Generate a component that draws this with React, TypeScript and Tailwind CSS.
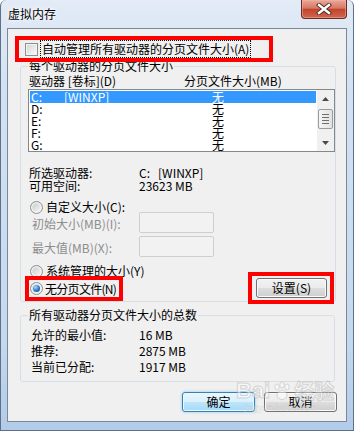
import React from 'react';

const font = "font-['Noto_Sans_CJK_SC','Microsoft_YaHei',sans-serif]";

function Radio({ checked }: { checked?: boolean }) {
  return (
    <span className="flex h-[13px] w-[13px] shrink-0 items-center justify-center rounded-full border border-[#8e8f8f] bg-[linear-gradient(135deg,#d2d2d2,#fafafa)] shadow-[inset_0_0_0_1px_#f4f4f4]">
      {checked ? (
        <span className="h-[7px] w-[7px] rounded-full bg-[radial-gradient(circle_at_35%_30%,#a8dcff,#2a78c8_55%,#0d3f82)]" />
      ) : (
        <span className="h-[7px] w-[7px] rounded-full bg-[linear-gradient(135deg,#cfcfcf,#f2f2f2)]" />
      )}
    </span>
  );
}

function Arrow({ up }: { up?: boolean }) {
  return (
    <div className="flex h-[17px] w-[17px] items-center justify-center">
      <svg width="7" height="4" viewBox="0 0 7 4">
        <path d={up ? 'M0 4 L3.5 0 L7 4 Z' : 'M0 0 L3.5 4 L7 0 Z'} fill="#4a4a4a" />
      </svg>
    </div>
  );
}

const drives = ['C:', 'D:', 'E:', 'F:', 'G:'];

export default function App() {
  return (
    <div className={`relative h-[431px] w-[354px] overflow-hidden rounded-t-[6px] border border-t-0 border-[#5f7188] bg-[linear-gradient(#e2ebf6,#d3e2f2_20%,#c4d8ee_80%,#b2cbe8)] text-[12px] text-black ${font}`}>
      {/* title bar */}
      <div className="flex h-[28px] items-start justify-between">
        <div className="pl-[7px] pt-[6px] text-[12px] leading-[16px] [text-shadow:0_0_6px_#fff,0_0_3px_#fff]">虚拟内存</div>
        <div className="mr-[6px] flex h-[19px] w-[46px] items-center justify-center rounded-b-[4px] border border-t-0 border-[#6b2a22] bg-[linear-gradient(#e9a899,#d77862_45%,#c4432c_52%,#d0684e)] shadow-[inset_0_0_0_1px_#f0b8aa80]">
          <svg width="16" height="12" viewBox="0 0 16 12">
            <path d="M3 2 L13 10 M13 2 L3 10" stroke="#4a2a26" strokeWidth="4.2" strokeLinecap="square" />
            <path d="M3 2 L13 10 M13 2 L3 10" stroke="#ffffff" strokeWidth="2.4" strokeLinecap="square" />
          </svg>
        </div>
      </div>

      {/* client area */}
      <div className="relative ml-[6px] h-[394px] w-[340px] border border-[#7a8898] bg-[#f0f0f0]">
        <div className="pl-[7px] pt-[7px]">
          <div className="relative z-10 flex h-[26px] w-[258px] items-center border-4 border-[#ff0000]">
            <span className="ml-[6px] h-[13px] w-[13px] shrink-0 border border-[#8e8f8f] bg-[linear-gradient(135deg,#d4d4d4,#fbfbfb)] shadow-[inset_0_0_0_1px_#f3f3f3]" />
            <span className="ml-[2px] whitespace-nowrap border border-dotted border-black px-[1px] leading-[16px]">自动管理所有驱动器的分页文件大小(A)</span>
          </div>
        </div>

        {/* per-drive group */}
        <fieldset className="ml-[12px] mt-[-3px] w-[315px] rounded-[3px] border border-[#d5dfe5] p-0">
          <legend className="ml-[7px] px-[1px] leading-[14px]">每个驱动器的分页文件大小</legend>
          <div className="mt-[1px] flex h-[14px] pl-[8px] leading-[14px]">
            <span className="w-[155px]">驱动器 [卷标](D)</span>
            <span>分页文件大小(MB)</span>
          </div>
          <div className="ml-[7px] mt-[1px] flex h-[63px] w-[307px] border border-[#828790] bg-white">
            <div className="w-[288px] p-[1px]">
              {drives.map((d, i) => (
                <div
                  key={d}
                  className={`flex h-[12px] items-center pl-[1px] leading-[12px] ${i === 0 ? 'bg-[#3399ff] text-white' : ''}`}
                >
                  <span className="w-[33px]">{d}</span>
                  <span className="w-[148px]">{i === 0 ? '[WINXP]' : ''}</span>
                  <span>无</span>
                </div>
              ))}
            </div>
            <div className="flex w-[17px] flex-col bg-[#f0f0f0]">
              <Arrow up />
              <div className="ml-[1px] mt-[2px] flex h-[20px] w-[15px] flex-col items-center justify-center gap-[2px] rounded-[2px] border border-[#9b9b9b] bg-[linear-gradient(90deg,#f5f5f5,#e2e2e2)]">
                <span className="h-px w-[7px] bg-[#6f6f6f]" />
                <span className="h-px w-[7px] bg-[#6f6f6f]" />
                <span className="h-px w-[7px] bg-[#6f6f6f]" />
                <span className="h-px w-[7px] bg-[#6f6f6f]" />
              </div>
              <div className="flex-1" />
              <Arrow />
            </div>
          </div>

          <div className="mt-[14px] pl-[8px]">
            <div className="flex h-[13px] leading-[13px]">
              <span className="w-[110px]">所选驱动器:</span>
              <span>C:&nbsp;&nbsp;&nbsp;[WINXP]</span>
            </div>
            <div className="flex h-[13px] leading-[13px]">
              <span className="w-[110px]">可用空间:</span>
              <span>23623 MB</span>
            </div>
          </div>

          <div className="ml-[9px] mt-[9px] flex h-[12px] items-center gap-[3px] leading-[12px]">
            <Radio />
            <span>自定义大小(C):</span>
          </div>
          <div className="mt-[-1px] flex h-[21px] items-center pl-[11px] text-[#8d8d8d]">
            <span className="w-[107px] pt-[2px]">初始大小(MB)(I):</span>
            <span className="h-[21px] w-[75px] rounded-[2px] border border-[#cfcfcf] bg-[#f2f2f2]" />
          </div>
          <div className="mt-[3px] flex h-[21px] items-center pl-[11px] text-[#8d8d8d]">
            <span className="w-[107px] pt-[2px]">最大值(MB)(X):</span>
            <span className="h-[21px] w-[75px] rounded-[2px] border border-[#cfcfcf] bg-[#f2f2f2]" />
          </div>

          <div className="ml-[9px] mt-[8px] flex h-[12px] items-center gap-[3px] leading-[12px]">
            <Radio />
            <span>系统管理的大小(Y)</span>
          </div>
          <div className="mb-[-3px] mt-[-5px] flex items-start justify-between pl-[4px] pr-[1px]">
            <div className="relative z-10 mt-[4px] flex h-[25px] w-[98px] items-center gap-[2px] border-4 border-[#ff0000] pl-[1px]">
              <Radio checked />
              <span className="whitespace-nowrap leading-[14px] tracking-[-0.7px]">无分页文件(N)</span>
            </div>
            <div className="relative z-10 h-[32px] w-[86px] border-4 border-[#ff0000] pl-[4px] pt-[2px]">
              <button className="h-[20px] w-[71px] rounded-[3px] border border-[#707070] bg-[linear-gradient(#f2f2f2,#ebebeb_50%,#dddddd_50%,#cfcfcf)] leading-[16px] shadow-[inset_0_0_0_1px_#fbfbfb]">
                设置(S)
              </button>
            </div>
          </div>
        </fieldset>

        {/* totals group */}
        <fieldset className="ml-[12px] mt-[6px] w-[315px] rounded-[3px] border border-[#d5dfe5] p-0 pb-[6px]">
          <legend className="ml-[7px] px-[1px] leading-[14px]">所有驱动器分页文件大小的总数</legend>
          <div className="pl-[10px] pt-[5px] leading-[16px]">
            <div className="flex h-[16px]">
              <span className="w-[108px]">允许的最小值:</span>
              <span>16 MB</span>
            </div>
            <div className="flex h-[16px]">
              <span className="w-[108px]">推荐:</span>
              <span>2875 MB</span>
            </div>
            <div className="flex h-[16px]">
              <span className="w-[108px]">当前已分配:</span>
              <span>1917 MB</span>
            </div>
          </div>
        </fieldset>

        <div className="mt-[10px] flex justify-end gap-[9px] pr-[9px]">
          <button className="h-[20px] w-[73px] rounded-[3px] border border-[#3c7fb1] bg-[linear-gradient(#eaf6fd,#d9f0fc_50%,#bee6fd_50%,#a7d9f5)] leading-[16px] shadow-[inset_0_0_0_1px_#e8f8ff,0_0_3px_#7fc8f5]">
            确定
          </button>
          <button className="h-[20px] w-[73px] rounded-[3px] border border-[#707070] bg-[linear-gradient(#f2f2f2,#ebebeb_50%,#dddddd_50%,#cfcfcf)] leading-[16px] shadow-[inset_0_0_0_1px_#fbfbfb]">
            取消
          </button>
        </div>

        {/* baidu watermark */}
        <div className="pointer-events-none absolute left-[228px] top-[350px] flex flex-col items-start opacity-50">
          <div className="flex items-center gap-[2px] font-['Liberation_Sans',sans-serif] text-[22px] font-bold leading-[24px] text-white [-webkit-text-stroke:1px_#b8b8b8]">
            <span>Bai</span>
            <svg width="20" height="20" viewBox="0 0 20 20">
              <g fill="#ffffff" stroke="#b8b8b8" strokeWidth="1">
                <ellipse cx="5" cy="6" rx="2.2" ry="3" />
                <ellipse cx="10" cy="4" rx="2.2" ry="3" />
                <ellipse cx="15" cy="6" rx="2.2" ry="3" />
                <ellipse cx="10" cy="14" rx="5" ry="4.5" />
              </g>
            </svg>
            <span className={`${font} text-[20px]`}>经验</span>
          </div>
          <div className="ml-[8px] font-['Liberation_Sans',sans-serif] text-[9px] leading-[10px] text-white [-webkit-text-stroke:0.3px_#b8b8b8]">
            jingyan.baidu.com
          </div>
        </div>
      </div>
    </div>
  );
}
